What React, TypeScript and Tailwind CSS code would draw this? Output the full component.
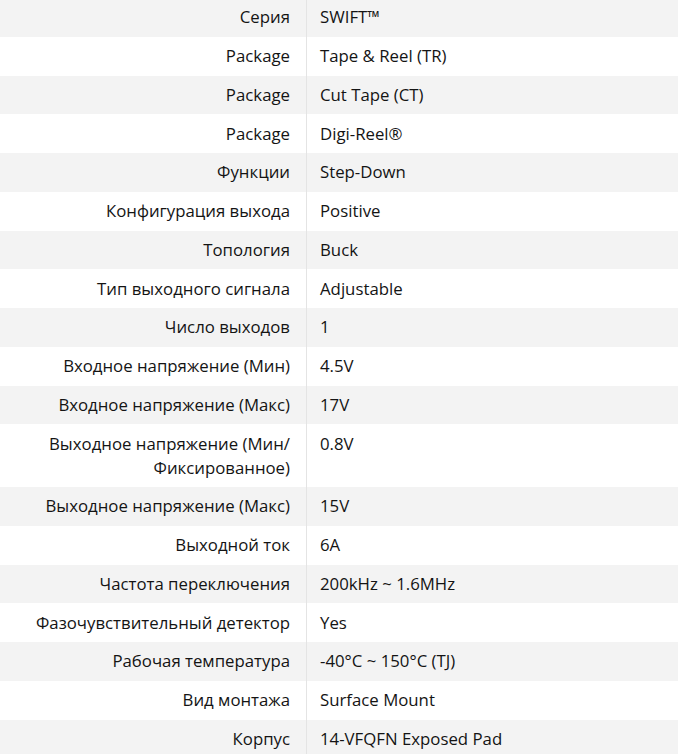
import React from "react";

const rows: [string, string][] = [
  ["Серия", "SWIFT™"],
  ["Package", "Tape & Reel (TR)"],
  ["Package", "Cut Tape (CT)"],
  ["Package", "Digi-Reel®"],
  ["Функции", "Step-Down"],
  ["Конфигурация выхода", "Positive"],
  ["Топология", "Buck"],
  ["Тип выходного сигнала", "Adjustable"],
  ["Число выходов", "1"],
  ["Входное напряжение (Мин)", "4.5V"],
  ["Входное напряжение (Макс)", "17V"],
  ["Выходное напряжение (Мин/ Фиксированное)", "0.8V"],
  ["Выходное напряжение (Макс)", "15V"],
  ["Выходной ток", "6A"],
  ["Частота переключения", "200kHz ~ 1.6MHz"],
  ["Фазочувствительный детектор", "Yes"],
  ["Рабочая температура", "-40°C ~ 150°C (TJ)"],
  ["Вид монтажа", "Surface Mount"],
  ["Корпус", "14-VFQFN Exposed Pad"],
];

export default function App() {
  return (
    <div
      className="w-[678px] h-[754px] overflow-hidden bg-white text-[#141414] text-[16.8px] leading-6"
      style={{ fontFamily: '"Open Sans", "Noto Sans", sans-serif' }}
    >
      <div className="-mt-[2px]">
        {rows.map(([k, v], i) => (
          <div
            key={i}
            className={`grid grid-cols-[307px_1fr] ${i % 2 === 0 ? "bg-[#f3f3f3]" : "bg-white"}`}
          >
            <div className="border-r border-[#e4e4e4] pr-[16px] pl-4 py-[7.375px] text-right">
              {k}
            </div>
            <div className="pl-[13px] pr-4 py-[7.375px]">{v}</div>
          </div>
        ))}
      </div>
    </div>
  );
}
